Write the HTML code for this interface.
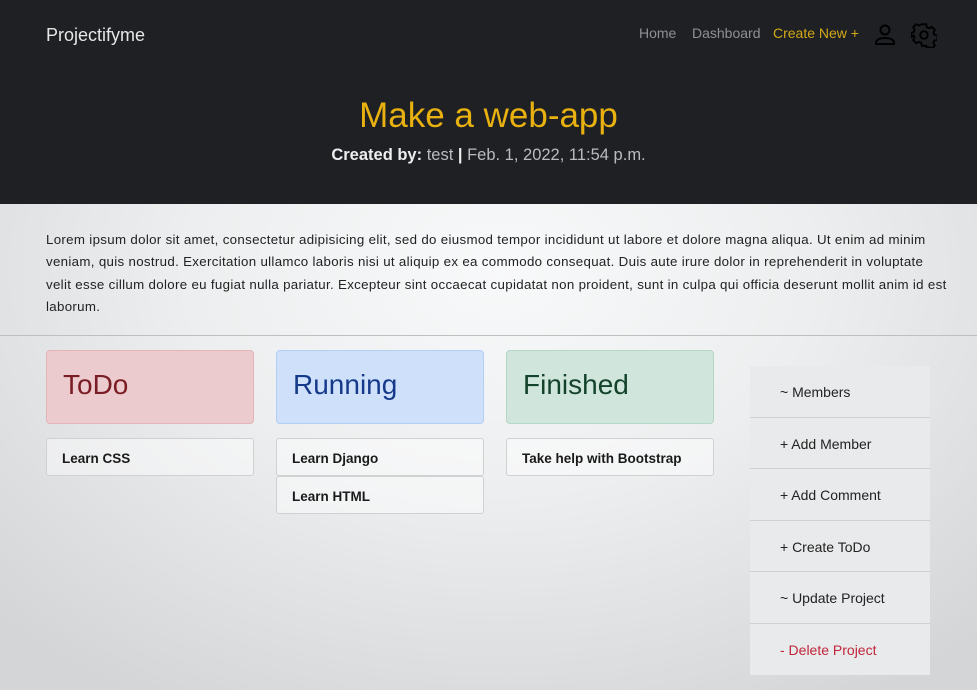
<!DOCTYPE html>
<html><head><style>
*{margin:0;padding:0;box-sizing:border-box}
body{width:977px;height:690px;overflow:hidden;font-family:"Liberation Sans",sans-serif;background:radial-gradient(ellipse 700px 500px at 500px 270px,#f8f9fa 0%,#eceeef 45%,#d4d5d7 100%);position:relative}
.hdr{position:absolute;left:0;top:0;width:977px;height:204px;background:#1e2024}
.brand{position:absolute;left:46px;top:25px;font-size:18px;color:#e6e6e6}
.nav{position:absolute;top:25px;font-size:14px;color:#8d9196}
h1{position:absolute;top:96px;width:977px;text-align:center;font-weight:normal;font-size:35px;color:#e8b10f}
.by{position:absolute;top:146px;width:977px;text-align:center;font-size:16.5px;color:#b9bcbf}
.by b{color:#eeeeee;font-weight:bold}
.desc{position:absolute;left:46px;top:229px;width:930px;white-space:nowrap;font-size:13.3px;letter-spacing:0.32px;line-height:22.3px;color:#222}
.hr{position:absolute;left:0;top:335px;width:977px;height:1px;background:#bdbfc1}
.col{position:absolute;width:208px;height:74px;border:1px solid;border-radius:4px;font-size:28px;padding:18px 0 0 16px}
.card{position:absolute;width:208px;height:38px;border:1px solid #d0d1d3;border-radius:3px;background:rgba(255,255,255,.45);font-size:13.5px;font-weight:bold;color:#1a1a1a;padding:12px 0 0 15px}
.side{position:absolute;left:750px;top:366px;width:180px;background:#e9eaeb}
.side div{height:51.5px;border-bottom:1px solid #cfd0d2;font-size:14px;color:#222;padding:18px 0 0 30px}
.side div:last-child{border-bottom:none;color:#c0253a}
</style></head><body>
<div class="hdr">
<div class="brand">Projectifyme</div>
<div class="nav" style="left:639px">Home</div>
<div class="nav" style="left:692px">Dashboard</div>
<div class="nav" style="left:773px;color:#d4a818">Create New +</div>
<svg style="position:absolute;left:874px;top:23px" width="22" height="22" viewBox="0 0 22 22" fill="none" stroke="#000" stroke-width="2"><circle cx="11" cy="7" r="4.5"/><path d="M2 21v-1c0-3 3-5 9-5s9 2 9 5v1z"/></svg>
<svg style="position:absolute;left:911px;top:22px" width="26" height="26" viewBox="0 0 24 24" fill="none" stroke="#000" stroke-width="1.7"><circle cx="12" cy="12" r="3.5"/><path d="M10 2h4l.6 2.8 2 1 2.6-1.3 2.8 2.8-1.3 2.6.9 2 2.8.6v4l-2.8.6-.9 2 1.3 2.6-2.8 2.8-2.6-1.3-2 .9L14 22h-4l-.6-2.8-2-.9-2.6 1.3-2.8-2.8 1.3-2.6-.9-2L0 14v-4l2.4-.6.9-2L2 4.8 4.8 2l2.6 1.3 2-1z"/></svg>
<h1>Make a web-app</h1>
<div class="by"><b>Created by:</b> test <b>|</b> Feb. 1, 2022, 11:54 p.m.</div>
</div>
<div class="desc">Lorem ipsum dolor sit amet, consectetur adipisicing elit, sed do eiusmod tempor incididunt ut labore et dolore magna aliqua. Ut enim ad minim<br>veniam, quis nostrud. Exercitation ullamco laboris nisi ut aliquip ex ea commodo consequat. Duis aute irure dolor in reprehenderit in voluptate<br>velit esse cillum dolore eu fugiat nulla pariatur. Excepteur sint occaecat cupidatat non proident, sunt in culpa qui officia deserunt mollit anim id est<br>laborum.</div>
<div class="hr"></div>
<div class="col" style="left:46px;top:350px;background:#ebcbce;border-color:#e4b4b9;color:#7a1c24">ToDo</div>
<div class="col" style="left:276px;top:350px;background:#cfe0fb;border-color:#b3cdf5;color:#153a8a">Running</div>
<div class="col" style="left:506px;top:350px;background:#d0e5dc;border-color:#b6d6c6;color:#14432b">Finished</div>
<div class="card" style="left:46px;top:438px">Learn CSS</div>
<div class="card" style="left:276px;top:438px">Learn Django</div>
<div class="card" style="left:276px;top:476px">Learn HTML</div>
<div class="card" style="left:506px;top:438px">Take help with Bootstrap</div>
<div class="side">
<div>~ Members</div><div>+ Add Member</div><div>+ Add Comment</div><div>+ Create ToDo</div><div>~ Update Project</div><div>- Delete Project</div>
</div>
</body></html>
